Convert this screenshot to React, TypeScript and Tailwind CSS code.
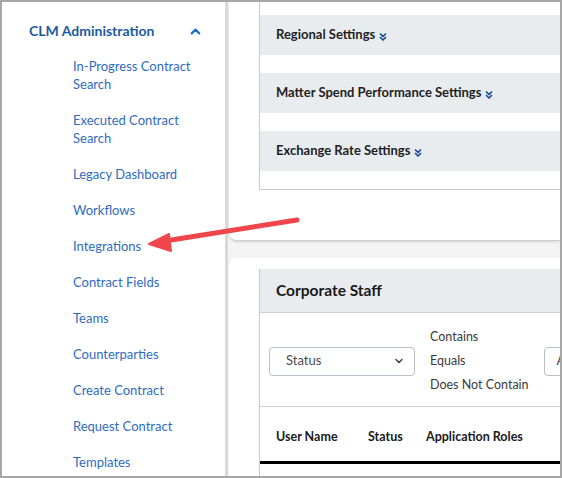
import { ChevronUp, ChevronsDown, ChevronDown } from 'lucide-react';

const menuItems = [
  'In-Progress Contract Search',
  'Executed Contract Search',
  'Legacy Dashboard',
  'Workflows',
  'Integrations',
  'Contract Fields',
  'Teams',
  'Counterparties',
  'Create Contract',
  'Request Contract',
  'Templates',
];

const settingsSections = ['Regional Settings', 'Matter Spend Performance Settings', 'Exchange Rate Settings'];

function Sidebar() {
  return (
    <aside className="w-[226px] shrink-0 bg-white border-r-[3px] border-[#d9d9d9] pt-[19px]">
      <div className="flex items-center justify-between pl-[27px] pr-[22px] h-[20px]">
        <span className="text-[14px] font-bold text-[#1c5aa3] leading-[20px]">CLM Administration</span>
        <ChevronUp size={15} strokeWidth={3.5} className="text-[#1f6fc5]" />
      </div>
      <ul className="mt-[7px] pl-[71px]">
        {menuItems.map(item => (
          <li key={item} className="w-[135px] py-[9px] text-[13px] leading-[18px] text-[#2f6bbf]">
            {item}
          </li>
        ))}
      </ul>
    </aside>
  );
}

function SettingsCard() {
  return (
    <div className="bg-white rounded-bl-[8px] border-b border-[#cfcfcf] shadow-sm pl-[30px] pb-[50px]">
      <div className="border-l border-b border-[#c9c9c9] pt-[13px] pb-[18px] flex flex-col gap-[18px]">
        {settingsSections.map(title => (
          <div key={title} className="h-[40px] bg-[#e9ecef] flex items-center pl-[16px]">
            <span className="text-[13px] font-bold text-[#1f1f1f]">{title}</span>
            <ChevronsDown size={12} strokeWidth={3.5} className="text-[#1a4f8f] ml-[2px] mt-[3px]" />
          </div>
        ))}
      </div>
    </div>
  );
}

function StaffCard() {
  return (
    <div className="bg-white rounded-tl-[8px] mt-[17px] pl-[30px] pt-[11px] flex-1">
      <div className="border-l border-[#c9c9c9] h-full">
        <div className="h-[44px] bg-[#e9ecef] border-b border-[#cfcfcf] flex items-center pl-[16px]">
          <span className="text-[15.5px] font-bold text-[#1a1a1a]">Corporate Staff</span>
        </div>
        <div className="h-[94px] border-b border-[#cfcfcf] flex items-center pl-[9px] gap-[15px]">
          <div className="w-[146px] h-[29px] shrink-0 border border-[#b9bfc6] rounded-[4px] flex items-center justify-between pl-[16px] pr-[9px] mt-[3px]">
            <span className="text-[13px] text-[#4a4a4a]">Status</span>
            <ChevronDown size={12} strokeWidth={3} className="text-[#444]" />
          </div>
          <div className="flex flex-col text-[12.5px] leading-[24px] text-[#3a3a3a] shrink-0 mt-[2px]">
            <span>Contains</span>
            <span>Equals</span>
            <span className="whitespace-nowrap">Does Not Contain</span>
          </div>
          <div className="w-[120px] h-[29px] shrink-0 border border-[#b9bfc6] rounded-[4px] flex items-center pl-[12px] mt-[3px]">
            <span className="text-[13px] text-[#4a4a4a]">A</span>
          </div>
        </div>
        <div className="h-[57px] border-b-[3px] border-black flex items-start pt-[21px] pl-[16px] text-[12.5px] leading-[18px] font-bold text-[#1a1a1a]">
          <span className="w-[92px]">User Name</span>
          <span className="w-[58px]">Status</span>
          <span className="whitespace-nowrap">Application Roles</span>
        </div>
      </div>
    </div>
  );
}

export default function App() {
  return (
    <div
      className="relative w-[562px] h-[478px] border-2 border-[#a6a6a6] bg-white flex overflow-hidden"
      style={{ fontFamily: 'Lato, "Open Sans", sans-serif' }}
    >
      <Sidebar />
      <main className="flex-1 min-w-0 bg-[#f3f3f3] pl-px flex flex-col overflow-hidden">
        <SettingsCard />
        <StaffCard />
      </main>
      <svg className="absolute left-[-2px] top-[-2px] pointer-events-none" width="562" height="478" viewBox="0 0 562 478">
        <line x1="297" y1="220" x2="165" y2="241" stroke="#f0464b" strokeWidth="5" strokeLinecap="round" />
        <polygon points="149,244 169,234 171,251" fill="#f0464b" stroke="#f0464b" strokeWidth="2" strokeLinejoin="round" />
      </svg>
    </div>
  );
}
